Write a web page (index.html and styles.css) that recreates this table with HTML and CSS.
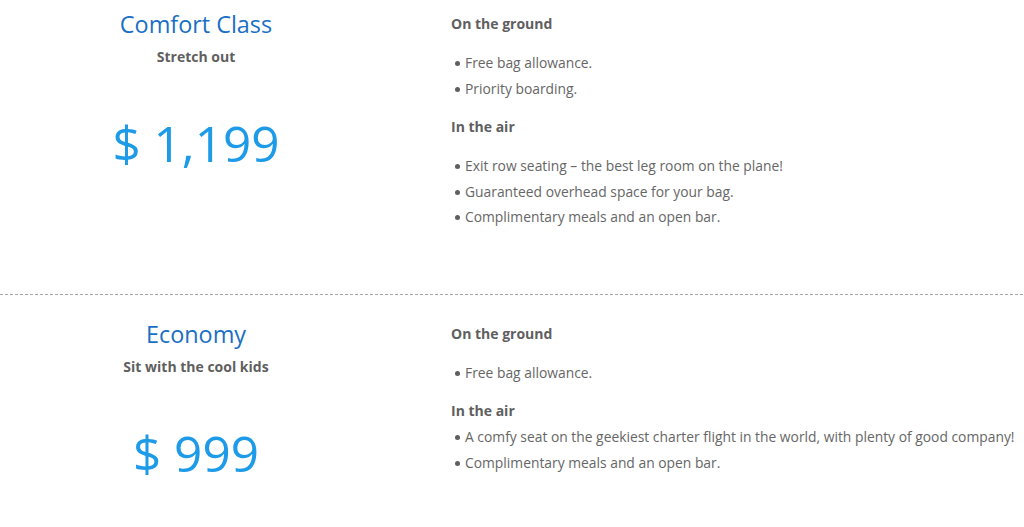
FILE: index.html
```html
<!DOCTYPE html>
<html lang="en">
<head>
<meta charset="utf-8">
<title>Fares</title>
<link rel="stylesheet" href="styles.css">
</head>
<body>
<main class="fares">
  <section class="fare fare--first">
    <div class="fare-summary">
      <h2 class="fare-title">Comfort Class</h2>
      <p class="fare-tagline">Stretch out</p>
      <p class="fare-price">$ 1,199</p>
    </div>
    <div class="fare-details">
      <h4 class="perk-heading">On the ground</h4>
      <ul class="perk-list">
        <li>Free bag allowance.</li>
        <li>Priority boarding.</li>
      </ul>
      <h4 class="perk-heading">In the air</h4>
      <ul class="perk-list">
        <li>Exit row seating – the best leg room on the plane!</li>
        <li>Guaranteed overhead space for your bag.</li>
        <li>Complimentary meals and an open bar.</li>
      </ul>
    </div>
  </section>
  <hr class="divider">
  <section class="fare">
    <div class="fare-summary">
      <h2 class="fare-title">Economy</h2>
      <p class="fare-tagline">Sit with the cool kids</p>
      <p class="fare-price">$ 999</p>
    </div>
    <div class="fare-details">
      <h4 class="perk-heading">On the ground</h4>
      <ul class="perk-list">
        <li>Free bag allowance.</li>
      </ul>
      <h4 class="perk-heading">In the air</h4>
      <ul class="perk-list perk-list--tight">
        <li>A comfy seat on the geekiest charter flight in the world, with plenty of good company!</li>
        <li>Complimentary meals and an open bar.</li>
      </ul>
    </div>
  </section>
</main>
</body>
</html>
```

FILE: styles.css
```css
* { box-sizing: border-box; }

html, body {
  margin: 0;
  padding: 0;
  background: #ffffff;
}

body {
  font-family: "Open Sans", "Noto Sans", sans-serif;
  color: #666666;
  font-size: 14px;
}

.fare {
  display: grid;
  grid-template-columns: 392px 1fr;
  padding: 26px 0 51px;
}

.fare--first {
  padding-top: 11px;
}

.fare-summary {
  display: flex;
  flex-direction: column;
  align-items: center;
  text-align: center;
}

.fare-title {
  margin: 0;
  font-size: 23.4px;
  line-height: 26px;
  font-weight: 500;
  color: #1a6fc4;
}

.fare-tagline {
  margin: 10px 0 0;
  font-size: 14px;
  line-height: 20px;
  font-weight: 700;
  color: #5f5f5f;
}

.fare-price {
  margin: 46px 0 0;
  font-size: 49.5px;
  line-height: 60px;
  font-weight: 400;
  color: #1d9be8;
}

.fare-details {
  padding-left: 59px;
}

.perk-heading {
  margin: 0;
  font-size: 14px;
  line-height: 26px;
  font-weight: 700;
  color: #5f5f5f;
}

.perk-list {
  margin: 13px 0 13px;
  padding: 0 0 0 14px;
  list-style: none;
}

.perk-list--tight {
  margin-top: 0;
}

.perk-list li {
  position: relative;
  font-size: 13.85px;
  line-height: 25.5px;
  color: #666666;
}

.perk-list li::before {
  content: "";
  position: absolute;
  left: -10px;
  top: 11px;
  width: 5px;
  height: 5px;
  border-radius: 50%;
  background: #5f5f5f;
}

.divider {
  margin: 0;
  border: 0;
  height: 1px;
  background: repeating-linear-gradient(to right, #a8a8a8 0 3px, transparent 3px 5px);
}
```
